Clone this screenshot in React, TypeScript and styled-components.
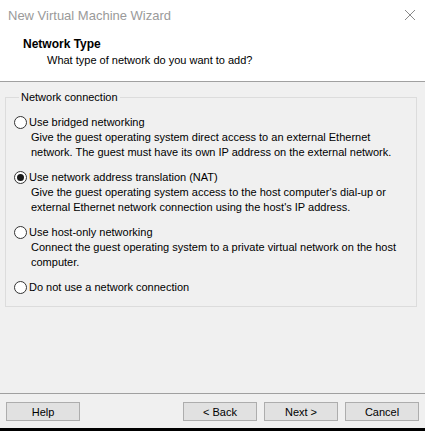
import React from "react";
import styled, { createGlobalStyle } from "styled-components";

const Global = createGlobalStyle`
  html, body { margin: 0; padding: 0; background: #000; }
  body { font-family: "Liberation Sans", Arial, sans-serif; font-size: 11px; color: #000; }
  * { box-sizing: border-box; }
`;

const Window = styled.div`
  width: 425px;
  height: 428px;
  display: flex;
  flex-direction: column;
  background: #f0f0f0;
  overflow: hidden;
  white-space: nowrap;
`;

const TitleBar = styled.div`
  height: 30px;
  display: flex;
  align-items: center;
  justify-content: space-between;
  padding: 0 9px 0 8px;
  background: #fff;
`;

const TitleText = styled.span`
  font-size: 13px;
  color: #9a9a9a;
`;

const CloseIcon = () => (
  <svg width="12" height="12" viewBox="0 0 12 12">
    <path d="M1 1 L11 11 M11 1 L1 11" stroke="#8a8a8a" strokeWidth="1" fill="none" />
  </svg>
);

const Header = styled.div`
  height: 52px;
  background: #fff;
  border-bottom: 1px solid #a0a0a0;
  padding: 6px 0 0 23px;
  display: flex;
  flex-direction: column;
`;

const HeaderTitle = styled.div`
  font-weight: bold;
  font-size: 12px;
  line-height: 16px;
`;

const HeaderSub = styled.div`
  padding-left: 24px;
  line-height: 17px;
`;

const Body = styled.div`
  flex: 1;
  padding: 8px 8px 0 5px;
`;

const Group = styled.fieldset`
  margin: 0;
  padding: 10px 8px 11px 8px;
  border: 1px solid #dcdcdc;
  display: flex;
  flex-direction: column;
  gap: 10px;
`;

const Legend = styled.legend`
  padding: 0 2px;
  margin-left: 5px;
  line-height: 15px;
`;

const Option = styled.div`
  display: flex;
  flex-direction: column;
`;

const RadioRow = styled.label`
  display: flex;
  align-items: center;
  height: 15px;
  line-height: 15px;
  gap: 2px;
`;

const Radio = styled.span<{ $checked?: boolean }>`
  width: 13px;
  height: 13px;
  border-radius: 50%;
  border: 1px solid #333;
  background: #fff;
  display: flex;
  align-items: center;
  justify-content: center;
  flex-shrink: 0;
  &::after {
    content: "";
    width: 7px;
    height: 7px;
    border-radius: 50%;
    background: ${(p) => (p.$checked ? "#1a1a1a" : "transparent")};
  }
`;

const Desc = styled.div`
  padding-left: 17px;
  line-height: 15px;
`;

const Footer = styled.div`
  border-top: 1px solid #a0a0a0;
  height: 35px;
  padding: 8px 6px 0 6px;
  display: flex;
  align-items: flex-start;
`;

const Button = styled.button<{ $push?: boolean }>`
  width: 74px;
  height: 19px;
  padding: 0;
  margin-left: ${(p) => (p.$push ? "auto" : "7px")};
  background: #e1e1e1;
  border: 1px solid #adadad;
  font-family: "Liberation Sans", Arial, sans-serif;
  font-size: 11px;
  color: #000;
  &:first-child { margin-left: 0; }
`;

const options = [
  {
    label: "Use bridged networking",
    desc: [
      "Give the guest operating system direct access to an external Ethernet",
      "network. The guest must have its own IP address on the external network.",
    ],
  },
  {
    label: "Use network address translation (NAT)",
    checked: true,
    desc: [
      "Give the guest operating system access to the host computer's dial-up or",
      "external Ethernet network connection using the host's IP address.",
    ],
  },
  {
    label: "Use host-only networking",
    desc: [
      "Connect the guest operating system to a private virtual network on the host",
      "computer.",
    ],
  },
  { label: "Do not use a network connection", desc: [] },
];

export default function App() {
  return (
    <>
      <Global />
      <Window>
        <TitleBar>
          <TitleText>New Virtual Machine Wizard</TitleText>
          <CloseIcon />
        </TitleBar>
        <Header>
          <HeaderTitle>Network Type</HeaderTitle>
          <HeaderSub>What type of network do you want to add?</HeaderSub>
        </Header>
        <Body>
          <Group>
            <Legend>Network connection</Legend>
            {options.map((o) => (
              <Option key={o.label}>
                <RadioRow>
                  <Radio $checked={o.checked} />
                  {o.label}
                </RadioRow>
                {o.desc.map((d) => (
                  <Desc key={d}>{d}</Desc>
                ))}
              </Option>
            ))}
          </Group>
        </Body>
        <Footer>
          <Button>Help</Button>
          <Button $push>&lt; Back</Button>
          <Button>Next &gt;</Button>
          <Button>Cancel</Button>
        </Footer>
      </Window>
    </>
  );
}
